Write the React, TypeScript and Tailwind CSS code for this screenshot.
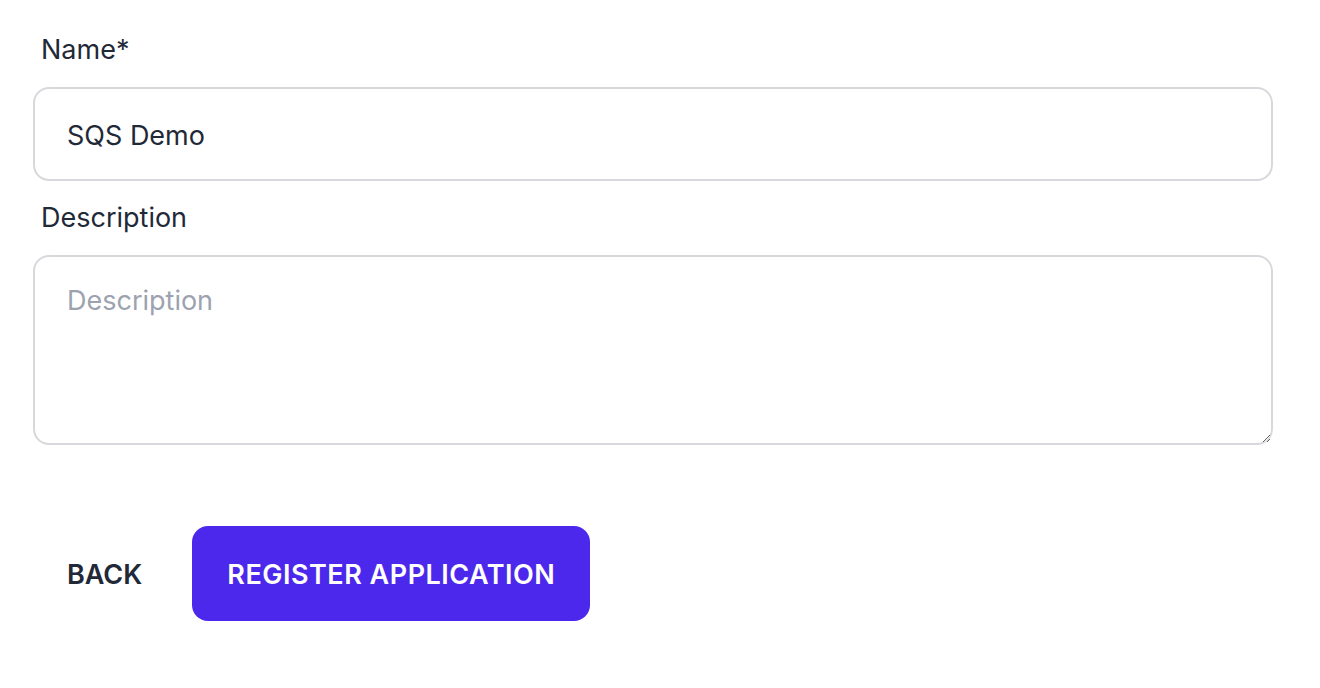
export default function App() {
  return (
    <div className="min-h-screen bg-white pl-[33px] pr-[47px] pt-[13px] font-['Inter',sans-serif] text-[#1f2937]">
      <label className="mt-[19px] mb-[19px] block pl-[8px] text-[27px] leading-[36px]">
        Name*
      </label>
      <input
        type="text"
        defaultValue="SQS Demo"
        className="block h-[94px] w-full rounded-[16px] border-2 border-[#d8d8dc] px-[32px] pt-[3px] text-[27px] text-[#1f2937] outline-none"
      />
      <label className="mt-[19px] mb-[19px] block pl-[8px] text-[27px] leading-[36px]">
        Description
      </label>
      <textarea
        placeholder="Description"
        className="block h-[190px] w-full rounded-[16px] border-2 border-[#d8d8dc] px-[32px] py-[26px] text-[27px] leading-[36px] text-[#1f2937] outline-none placeholder:text-[#9ca3af]"
      />
      <div className="mt-[81px] flex items-center gap-[16px]">
        <button className="h-[95px] rounded-[16px] px-[34px] pt-[3px] text-[27px] font-semibold text-[#1f2937]">
          BACK
        </button>
        <button className="h-[95px] rounded-[16px] bg-[#4c28ed] px-[35px] pt-[3px] text-[27px] font-semibold tracking-[0.5px] text-white">
          REGISTER APPLICATION
        </button>
      </div>
    </div>
  );
}
